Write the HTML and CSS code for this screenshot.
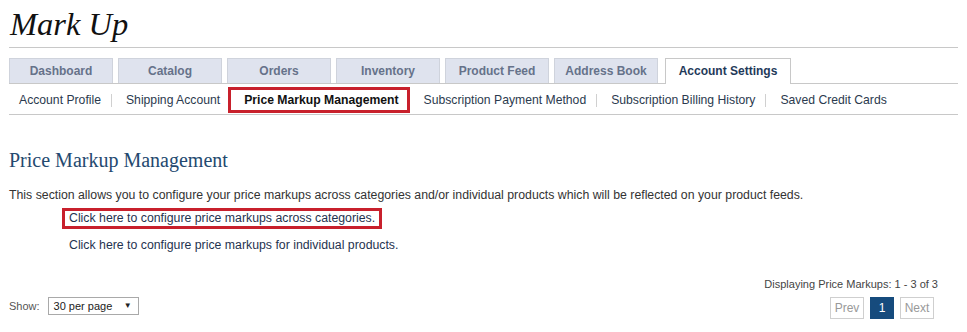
FILE: index.html
```html
<!DOCTYPE html>
<html lang="en">
<head>
    <meta charset="UTF-8">
    <title>Mark Up - Price Markup Management</title>
    <link rel="stylesheet" href="styles.css">
</head>
<body>
    <div class="page">
        <h1 class="site-title">Mark Up</h1>

        <!-- Main tabs -->
        <ul class="tabs">
            <li class="tab">Dashboard</li>
            <li class="tab">Catalog</li>
            <li class="tab">Orders</li>
            <li class="tab">Inventory</li>
            <li class="tab">Product Feed</li>
            <li class="tab">Address Book</li>
            <li class="tab tab-active">Account Settings</li>
        </ul>

        <!-- Account settings sub navigation -->
        <ul class="subnav">
            <li class="subnav-item">Account Profile</li>
            <li class="subnav-sep"></li>
            <li class="subnav-item">Shipping Account</li>
            <li class="subnav-item subnav-active">Price Markup Management</li>
            <li class="subnav-item">Subscription Payment Method</li>
            <li class="subnav-sep"></li>
            <li class="subnav-item">Subscription Billing History</li>
            <li class="subnav-sep"></li>
            <li class="subnav-item">Saved Credit Cards</li>
        </ul>

        <div class="content">
            <h2 class="section-title">Price Markup Management</h2>
            <p class="intro">This section allows you to configure your price markups across categories and/or individual products which will be reflected on your product feeds.</p>
            <div class="links">
                <a class="link link-marked" href="#">Click here to configure price markups across categories.</a>
                <a class="link" href="#">Click here to configure price markups for individual products.</a>
            </div>

            <div class="list-footer">
                <div class="show">
                    <span>Show:</span>
                    <div class="select">30 per page <span class="caret">&#9660;</span></div>
                </div>
                <div class="paging">
                    <div class="paging-info">Displaying Price Markups: 1 - 3 of 3</div>
                    <div class="pager">
                        <span class="page-btn">Prev</span>
                        <span class="page-btn page-current">1</span>
                        <span class="page-btn">Next</span>
                    </div>
                </div>
            </div>
        </div>
    </div>
</body>
</html>
```

FILE: styles.css
```css
* {
    margin: 0;
    padding: 0;
    box-sizing: border-box;
}

body {
    font-family: 'Liberation Sans', Arial, sans-serif;
    font-size: 12px;
    color: #333;
    background: #fff;
}

.page {
    width: 949px;
    margin-left: 9px;
}

.site-title {
    font-family: 'Liberation Serif', 'Times New Roman', serif;
    font-style: italic;
    font-weight: normal;
    font-size: 32.5px;
    color: #111;
    height: 48px;
    line-height: 48px;
    padding-left: 1px;
    border-bottom: 1px solid #c8c8c8;
}

/* Tabs */
.tabs {
    list-style: none;
    display: flex;
    gap: 5px;
    margin-top: 10px;
    height: 26px;
    border-bottom: 1px solid #c8c8c8;
}

.tab {
    width: 104px;
    height: 25px;
    line-height: 25px;
    text-align: center;
    background: #dfe3ee;
    border: 1px solid #cfd3dc;
    border-bottom: none;
    font-weight: bold;
    font-size: 12px;
    color: #66728a;
}

.tab-active {
    width: 126px;
    height: 26px;
    margin-left: 2px;
    background: #fff;
    border-color: #c8c8c8;
    color: #1f3a5a;
}

/* Sub navigation */
.subnav {
    list-style: none;
    display: flex;
    align-items: center;
    height: 31px;
    border-bottom: 1px solid #c8c8c8;
    padding-top: 2px;
    font-size: 12.2px;
}

.subnav-item {
    height: 26px;
    line-height: 26px;
    padding: 0 10px;
    color: #2b3a4e;
}

.subnav-sep {
    width: 1px;
    height: 13px;
    background: #d0d0d0;
    margin-right: 4px;
}

.subnav-active {
    font-weight: bold;
    color: #111;
    border: 3px solid #c8202c;
    line-height: 20px;
    margin: 0 4px 0 -2px;
    padding: 0 8px 0 13px;
}

/* Content */
.content {
    padding-top: 33px;
}

.section-title {
    font-family: 'Liberation Serif', Georgia, serif;
    font-weight: normal;
    font-size: 20px;
    color: #24496f;
    line-height: 24px;
}

.intro {
    margin-top: 15px;
    line-height: 16px;
    font-size: 12.3px;
}

.links {
    display: flex;
    flex-direction: column;
    align-items: flex-start;
    margin-top: 5px;
    padding-left: 53px;
    font-size: 12.3px;
}

.link {
    color: #1f3350;
    text-decoration: none;
    line-height: 15px;
    padding: 0 4px 0 4px;
    border: 3px solid transparent;
    margin-bottom: 6px;
}

.link-marked {
    border-color: #c8202c;
}

.list-footer {
    display: flex;
    justify-content: space-between;
    align-items: flex-end;
    margin-top: 15px;
    padding-right: 24px;
}

.show {
    display: flex;
    align-items: center;
    gap: 8px;
    color: #555;
    font-size: 11px;
    margin-bottom: 4px;
}

.select {
    width: 91px;
    height: 18px;
    line-height: 16px;
    border: 1px solid #a9a9a9;
    padding-left: 5px;
    color: #222;
    font-size: 11px;
    position: relative;
}

.caret {
    position: absolute;
    right: 6px;
    top: 0;
    font-size: 8px;
}

.paging {
    display: flex;
    flex-direction: column;
    align-items: flex-end;
}

.paging-info {
    font-size: 11px;
    color: #444;
    line-height: 14px;
    margin-right: -4px;
}

.pager {
    display: flex;
    gap: 6px;
    margin-top: 6px;
}

.page-btn {
    width: 34px;
    height: 22px;
    line-height: 20px;
    text-align: center;
    border: 1px solid #cfcfcf;
    color: #999;
    font-size: 12px;
}

.page-current {
    width: 24px;
    background: #164b7d;
    border-color: #164b7d;
    color: #fff;
}
```
